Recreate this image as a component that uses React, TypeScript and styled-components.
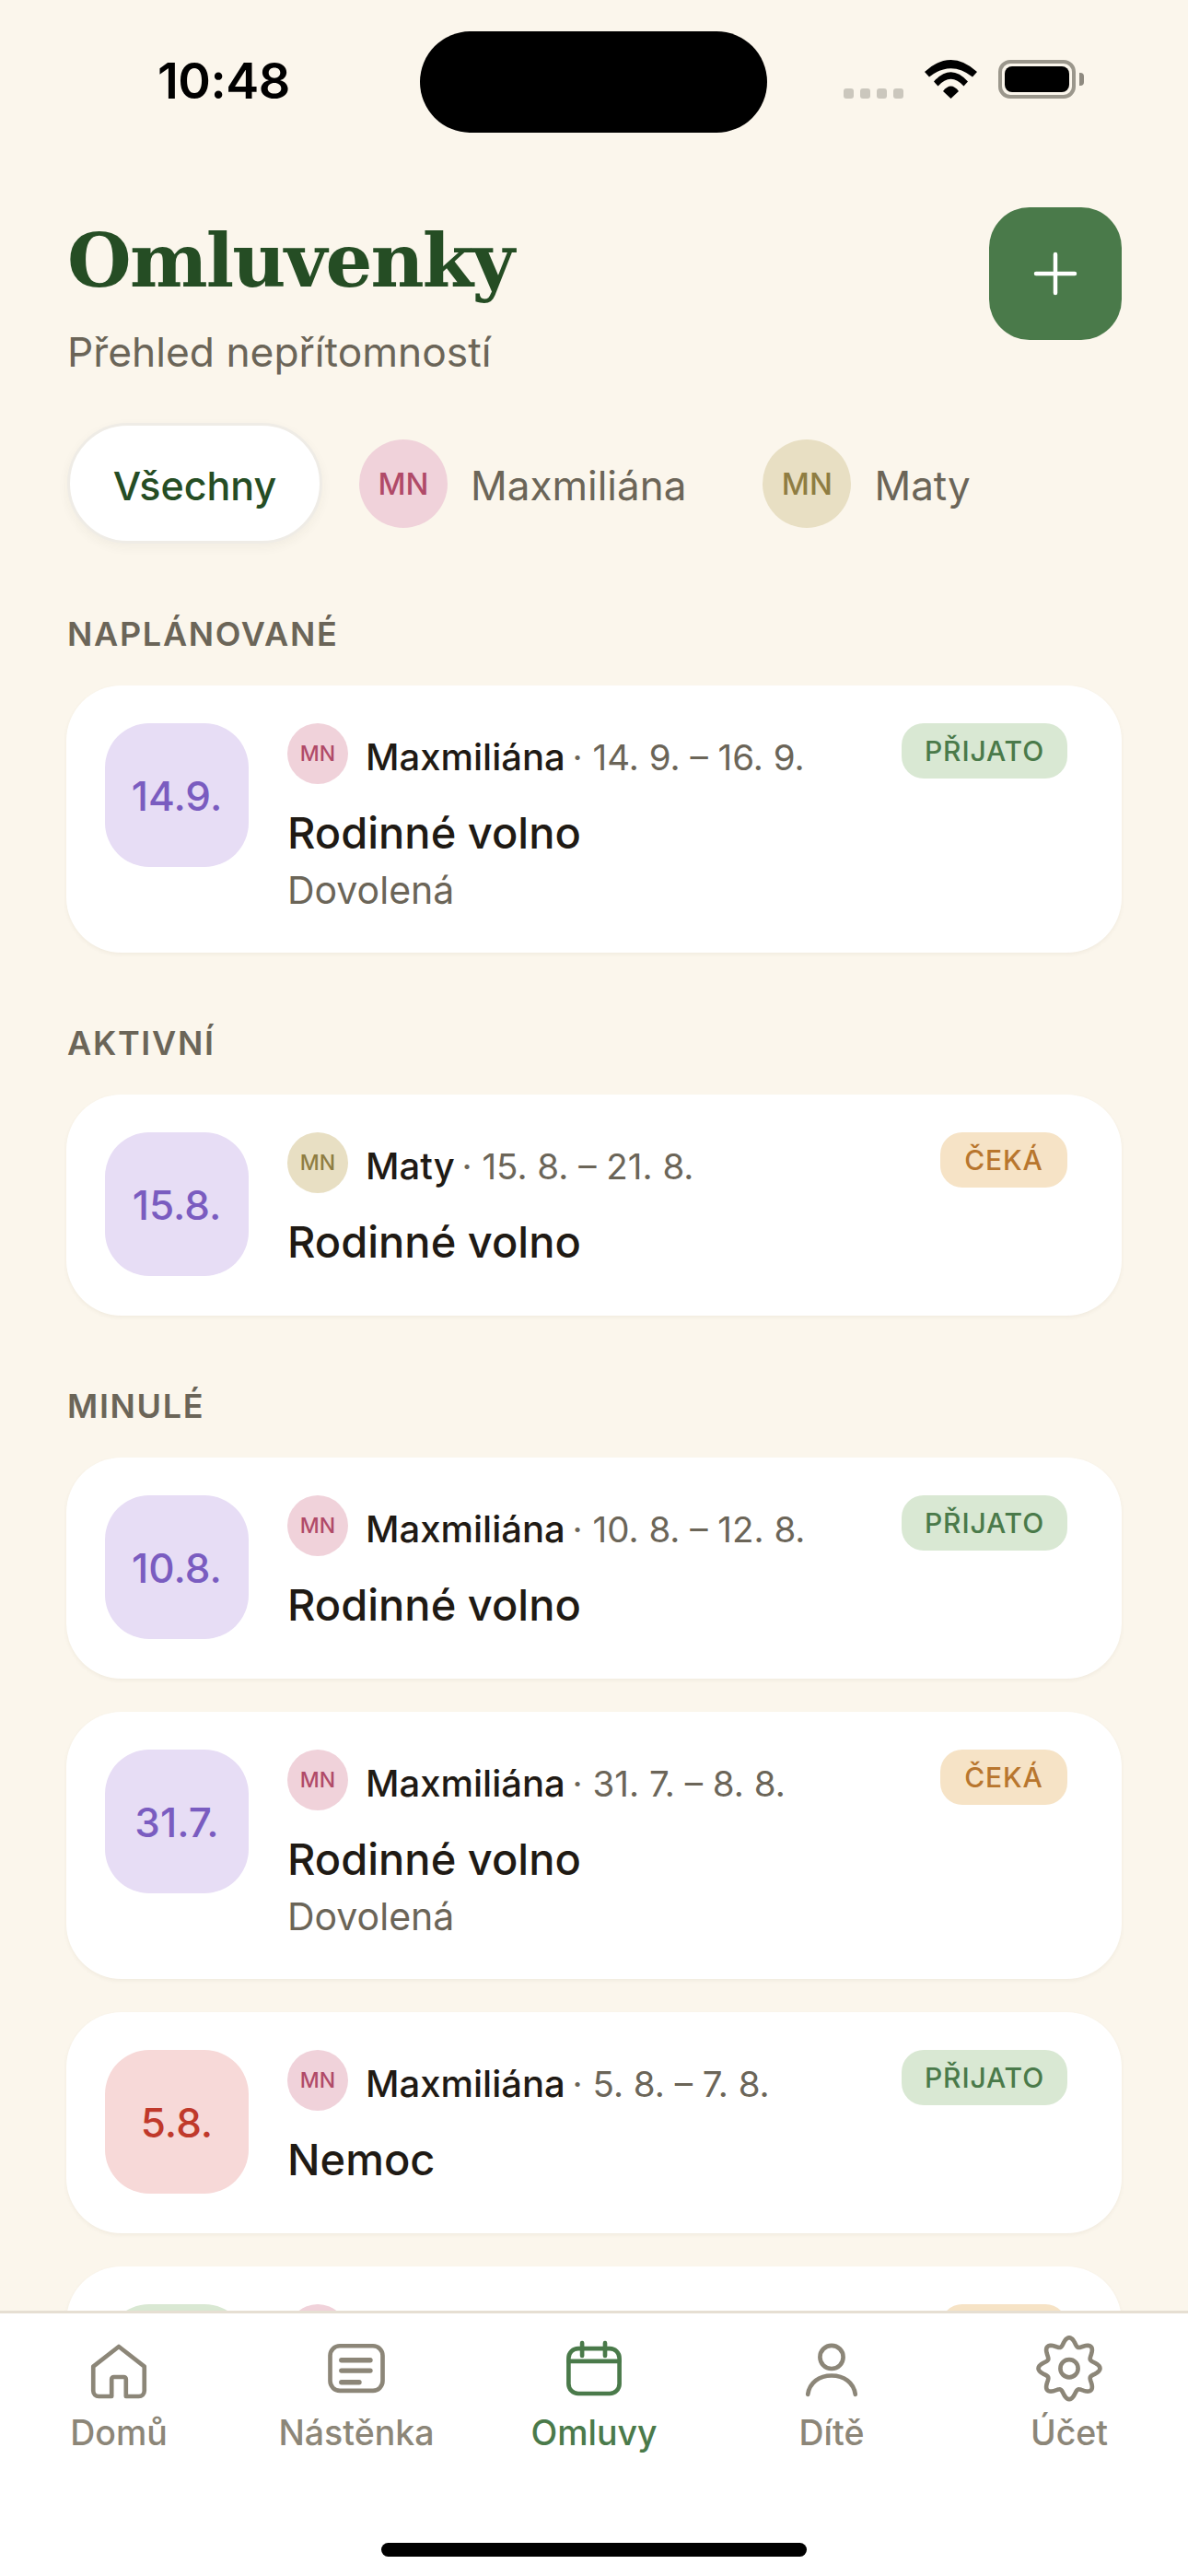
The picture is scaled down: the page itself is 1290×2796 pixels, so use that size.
import styled, { createGlobalStyle } from "styled-components";

type Who = "max" | "maty";
type Status = "ok" | "wait";
type Tone = "purple" | "red" | "green";

type Leave = {
  date: string;
  tone: Tone;
  who: Who;
  name: string;
  range: string;
  status: Status;
  title: string;
  note?: string;
};

const sections: { label: string; items: Leave[] }[] = [
  {
    label: "NAPLÁNOVANÉ",
    items: [
      { date: "14.9.", tone: "purple", who: "max", name: "Maxmiliána", range: "14. 9. – 16. 9.", status: "ok", title: "Rodinné volno", note: "Dovolená" },
    ],
  },
  {
    label: "AKTIVNÍ",
    items: [
      { date: "15.8.", tone: "purple", who: "maty", name: "Maty", range: "15. 8. – 21. 8.", status: "wait", title: "Rodinné volno" },
    ],
  },
  {
    label: "MINULÉ",
    items: [
      { date: "10.8.", tone: "purple", who: "max", name: "Maxmiliána", range: "10. 8. – 12. 8.", status: "ok", title: "Rodinné volno" },
      { date: "31.7.", tone: "purple", who: "max", name: "Maxmiliána", range: "31. 7. – 8. 8.", status: "wait", title: "Rodinné volno", note: "Dovolená" },
      { date: "5.8.", tone: "red", who: "max", name: "Maxmiliána", range: "5. 8. – 7. 8.", status: "ok", title: "Nemoc" },
      // cut off by the tab bar, only the top edge of its shapes shows
      { date: "", tone: "green", who: "max", name: "", range: "", status: "wait", title: "" },
    ],
  },
];

const toneColors = {
  purple: { bg: "#e7ddf5", fg: "#7a5cc0" },
  red: { bg: "#f7d9d8", fg: "#c0392b" },
  green: { bg: "#d9e8d3", fg: "#4a7a4a" },
};

const whoColors = {
  max: { bg: "#f0d2da", fg: "#b04a68" },
  maty: { bg: "#e8dfc3", fg: "#8f7d42" },
};

const statusInfo = {
  ok: { bg: "#d9e8d3", fg: "#4a7a4a", text: "PŘIJATO", width: 180 },
  wait: { bg: "#f6e3c6", fg: "#b8762e", text: "ČEKÁ", width: 138 },
};

// wavy cog outline, 8 lobes
const gearPath = () => {
  const pts: string[] = [];
  for (let i = 0; i < 160; i++) {
    const a = (i / 160) * Math.PI * 2;
    const r = 9.7 + 1.45 * Math.cos(8 * a);
    pts.push(`${(12 + r * Math.sin(a)).toFixed(2)} ${(11.9 - r * Math.cos(a)).toFixed(2)}`);
  }
  return `M${pts.join("L")}Z`;
};

const HomeIcon = () => (
  <NavSvg viewBox="0 0 24 24">
    <path d="M12 4 L2.75 11.2 V20 a2 2 0 0 0 2 2 H9.4 V15.8 a.8 .8 0 0 1 .8-.8 H13.8 a.8 .8 0 0 1 .8.8 V22 H19.25 a2 2 0 0 0 2-2 V11.2 Z" />
  </NavSvg>
);

const BoardIcon = () => (
  <NavSvg viewBox="0 0 24 24">
    <rect x="2.5" y="3.75" width="19" height="16.2" rx="3.5" />
    <path d="M6.6 8.9H17M6.6 12.7H17M6.6 16.9H13" strokeWidth="1.8" />
  </NavSvg>
);

const CalendarIcon = () => (
  <NavSvg viewBox="0 0 24 24">
    <rect x="2.8" y="4.7" width="18.4" height="16.3" rx="3.5" />
    <path d="M7.7 2.7V7.3M16 2.7V7.3M2.8 9.3H21.2" />
  </NavSvg>
);

const PersonIcon = () => (
  <NavSvg viewBox="0 0 24 24">
    <circle cx="12" cy="7.8" r="4.2" />
    <path d="M3.4 21.3C4 17 7.5 14.5 12 14.5C16.5 14.5 20 17 20.6 21.3" />
  </NavSvg>
);

const GearIcon = () => (
  <NavSvg viewBox="0 0 24 24">
    <path d={gearPath()} />
    <circle cx="12" cy="11.9" r="3.2" />
  </NavSvg>
);

const tabs = [
  { label: "Domů", icon: <HomeIcon /> },
  { label: "Nástěnka", icon: <BoardIcon /> },
  { label: "Omluvy", icon: <CalendarIcon />, active: true },
  { label: "Dítě", icon: <PersonIcon /> },
  { label: "Účet", icon: <GearIcon /> },
];

const LeaveCard = ({ item }: { item: Leave }) => (
  <Card>
    <DateTile $tone={item.tone}>{item.date}</DateTile>
    <CardBody>
      <CardTop>
        <MiniAvatar $who={item.who}>{item.name && "MN"}</MiniAvatar>
        <Meta>
          <MetaName>{item.name}</MetaName>
          {item.range && <MetaRange> · {item.range}</MetaRange>}
        </Meta>
        <StatusPill $status={item.status}>{item.name && statusInfo[item.status].text}</StatusPill>
      </CardTop>
      <CardTitle>{item.title}</CardTitle>
      {item.note && <CardNote>{item.note}</CardNote>}
    </CardBody>
  </Card>
);

const App = () => {
  return (
    <Screen>
      <GlobalStyle />
      <StatusBar>
        <Clock>10:48</Clock>
        <Island />
        <StatusIcons>
          <SignalDots>
            <i />
            <i />
            <i />
            <i />
          </SignalDots>
          <svg width="57" height="42" viewBox="0 0 57 42">
            <path d="M0 13Q28.5-13 57 13L52 18.5Q28.5 0 5 18.5Z" />
            <path d="M10 23.5Q28.5 3 47 23.5L42.5 28.5Q28.5 13 14.5 28.5Z" />
            <path d="M20 34Q28.5 23 37 34L28.5 42Z" />
          </svg>
          <Battery>
            <BatteryFill />
          </Battery>
        </StatusIcons>
      </StatusBar>

      <Content>
        <Header>
          <div>
            <Title>Omluvenky</Title>
            <Subtitle>Přehled nepřítomností</Subtitle>
          </div>
          <AddButton>
            <svg width="48" height="48" viewBox="0 0 48 48" fill="none" stroke="#fff" strokeWidth="4.5" strokeLinecap="round">
              <path d="M24 3V45M3 24H45" />
            </svg>
          </AddButton>
        </Header>

        <Filters>
          <AllChip>
            <ChipText>Všechny</ChipText>
          </AllChip>
          <PersonChip>
            <ChipAvatar $who="max">MN</ChipAvatar>
            <ChipText>Maxmiliána</ChipText>
          </PersonChip>
          <PersonChip>
            <ChipAvatar $who="maty">MN</ChipAvatar>
            <ChipText>Maty</ChipText>
          </PersonChip>
        </Filters>

        {sections.map((s) => (
          <Section key={s.label}>
            <SectionLabel>{s.label}</SectionLabel>
            <CardList>
              {s.items.map((item, i) => (
                <LeaveCard key={i} item={item} />
              ))}
            </CardList>
          </Section>
        ))}
      </Content>

      <TabBar>
        <Tabs>
          {tabs.map((t) => (
            <Tab key={t.label} $active={!!t.active}>
              {t.icon}
              <span>{t.label}</span>
            </Tab>
          ))}
        </Tabs>
        <HomeBar />
      </TabBar>
    </Screen>
  );
};

export default App;

const GlobalStyle = createGlobalStyle`
  html, body {
    margin: 0;
    padding: 0;
    background: #fbf6ec;
  }
  * {
    box-sizing: border-box;
  }
`;

const Screen = styled.div`
  width: 1290px;
  height: 2796px;
  display: flex;
  flex-direction: column;
  overflow: hidden;
  background: #fbf6ec;
  font-family: "Inter", "Liberation Sans", sans-serif;
  color: #1f1a14;
`;

const StatusBar = styled.div`
  flex: none;
  height: 144px;
  padding-top: 34px;
  display: grid;
  grid-template-columns: 456px 377px 1fr;
`;

const Clock = styled.div`
  padding: 29px 0 0 171px;
  font-size: 54px;
  line-height: 50px;
  font-weight: 600;
  color: #000;
  letter-spacing: -0.5px;
`;

const Island = styled.div`
  height: 110px;
  background: #000;
  border-radius: 55px;
`;

const StatusIcons = styled.div`
  display: flex;
  align-items: flex-end;
  height: 73px;
  padding-left: 83px;
`;

const SignalDots = styled.div`
  display: flex;
  gap: 7px;
  margin-right: 23px;

  i {
    display: block;
    width: 11px;
    height: 11px;
    border-radius: 3px;
    background: #cbc7bd;
  }
`;

const Battery = styled.div`
  position: relative;
  width: 84px;
  height: 42px;
  margin-left: 23px;
  border: 4px solid #9b978c;
  border-radius: 13px;
  padding: 3px;

  &::after {
    content: "";
    position: absolute;
    right: -13px;
    top: 10px;
    width: 5px;
    height: 14px;
    border-radius: 0 4px 4px 0;
    background: #8e8a80;
  }
`;

const BatteryFill = styled.div`
  width: 100%;
  height: 100%;
  border-radius: 8px;
  background: #000;
`;

const Content = styled.div`
  flex: 1;
  min-height: 0;
  overflow: hidden;
  padding: 81px 72px 0 73px;
`;

const Header = styled.div`
  display: flex;
  justify-content: space-between;
  align-items: flex-start;
`;

const Title = styled.h1`
  margin: 10px 0 0;
  font-family: "DejaVu Serif", "Liberation Serif", serif;
  font-size: 80px;
  line-height: 96px;
  font-weight: 700;
  color: #254d24;
  letter-spacing: -1.8px;
`;

const Subtitle = styled.div`
  margin-top: 26px;
  font-size: 44.3px;
  line-height: 50px;
  color: #6b6558;
`;

const AddButton = styled.div`
  width: 144px;
  height: 144px;
  border-radius: 44px;
  background: #4a7a4a;
  display: flex;
  align-items: center;
  justify-content: center;
`;

const Filters = styled.div`
  display: flex;
  align-items: center;
  gap: 24px;
  margin-top: 52px;
  height: 131px;
`;

const ChipText = styled.span`
  padding-top: 5px;
`;

const AllChip = styled.div`
  width: 277px;
  height: 131px;
  border-radius: 66px;
  background: #fff;
  border: 3px solid #efece6;
  box-shadow: 0 4px 12px rgba(60, 50, 30, 0.05);
  display: flex;
  align-items: center;
  justify-content: center;
  font-size: 43px;
  font-weight: 500;
  color: #254d24;
`;

const PersonChip = styled.div`
  display: flex;
  align-items: center;
  gap: 25px;
  padding: 0 43px 0 16px;
  font-size: 44px;
  color: #6b6558;
`;

const ChipAvatar = styled.div<{ $who: Who }>`
  width: 96px;
  height: 96px;
  border-radius: 50%;
  background: ${(p) => whoColors[p.$who].bg};
  color: ${(p) => whoColors[p.$who].fg};
  display: flex;
  align-items: center;
  justify-content: center;
  font-size: 33px;
  font-weight: 500;
`;

const Section = styled.section`
  margin-top: 76px;
`;

const SectionLabel = styled.div`
  height: 44px;
  margin-bottom: 34px;
  font-size: 36px;
  line-height: 44px;
  font-weight: 600;
  letter-spacing: 1.7px;
  color: #6b6558;
`;

const CardList = styled.div`
  display: flex;
  flex-direction: column;
  gap: 36px;
`;

const Card = styled.div`
  display: flex;
  gap: 42px;
  margin-left: -1px;
  padding: 41px 59px 43px 42px;
  border-radius: 60px;
  background: #fff;
  box-shadow: 0 2px 4px rgba(90, 70, 40, 0.06);
`;

const DateTile = styled.div<{ $tone: Tone }>`
  flex: none;
  width: 156px;
  height: 156px;
  padding-top: 2px;
  border-radius: 48px;
  background: ${(p) => toneColors[p.$tone].bg};
  color: ${(p) => toneColors[p.$tone].fg};
  display: flex;
  align-items: center;
  justify-content: center;
  font-size: 44px;
  font-weight: 450;
`;

const CardBody = styled.div`
  flex: 1;
  min-width: 0;
`;

const CardTop = styled.div`
  display: flex;
  align-items: flex-start;
  height: 66px;
`;

const MiniAvatar = styled.div<{ $who: Who }>`
  flex: none;
  width: 66px;
  height: 66px;
  border-radius: 50%;
  background: ${(p) => whoColors[p.$who].bg};
  color: ${(p) => whoColors[p.$who].fg};
  display: flex;
  align-items: center;
  justify-content: center;
  font-size: 23px;
  font-weight: 500;
`;

const Meta = styled.div`
  flex: 1;
  margin-left: 19px;
  height: 66px;
  line-height: 74px;
  white-space: nowrap;
`;

const MetaName = styled.span`
  font-size: 40px;
  font-weight: 500;
  color: #1f1a14;
`;

const MetaRange = styled.span`
  margin-left: -3px;
  font-size: 38.5px;
  color: #6b6558;
`;

const StatusPill = styled.div<{ $status: Status }>`
  flex: none;
  width: ${(p) => statusInfo[p.$status].width}px;
  height: 60px;
  border-radius: 24px;
  background: ${(p) => statusInfo[p.$status].bg};
  color: ${(p) => statusInfo[p.$status].fg};
  text-align: center;
  font-size: 30px;
  line-height: 60px;
  font-weight: 550;
  letter-spacing: 0.9px;
`;

const CardTitle = styled.div`
  margin-top: 17px;
  min-height: 73px;
  font-size: 47px;
  line-height: 72px;
  font-weight: 500;
  color: #1f1a14;
`;

const CardNote = styled.div`
  font-size: 41px;
  line-height: 50px;
  color: #6b6558;
`;

const TabBar = styled.div`
  flex: none;
  height: 288px;
  background: #fff;
  border-top: 3px solid #e6dfd3;
  display: flex;
  flex-direction: column;
  align-items: center;
`;

const Tabs = styled.div`
  width: 100%;
  display: grid;
  grid-template-columns: repeat(5, 258px);
  padding-top: 24px;
`;

const Tab = styled.div<{ $active: boolean }>`
  display: flex;
  flex-direction: column;
  align-items: center;
  gap: 12px;
  font-size: 37.5px;
  line-height: 44px;
  font-weight: ${(p) => (p.$active ? 500 : 450)};
  color: ${(p) => (p.$active ? "#4a7a4a" : "#8c8678")};
`;

const NavSvg = styled.svg`
  display: block;
  width: 72px;
  height: 72px;
  fill: none;
  stroke: currentColor;
  stroke-width: 1.55;
  stroke-linecap: round;
  stroke-linejoin: round;
`;

const HomeBar = styled.div`
  width: 462px;
  height: 15px;
  margin-top: 97px;
  border-radius: 8px;
  background: #000;
`;
